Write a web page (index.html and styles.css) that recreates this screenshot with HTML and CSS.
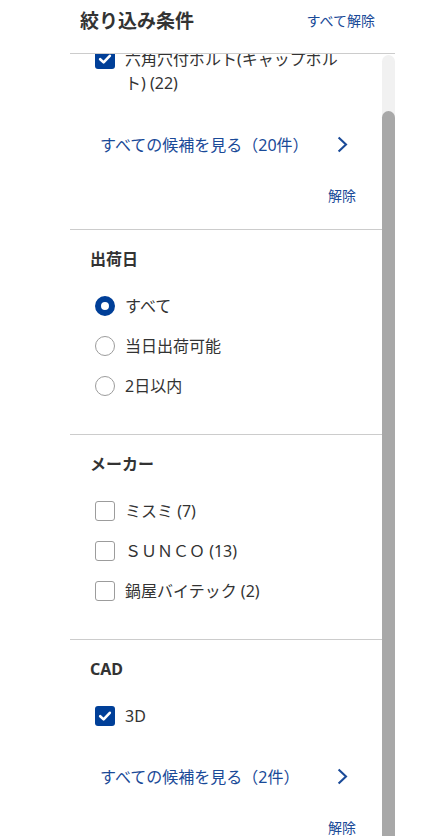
FILE: index.html
```html
<!DOCTYPE html>
<html lang="ja">
<head>
<meta charset="utf-8">
<title>絞り込み条件</title>
<link rel="stylesheet" href="styles.css">
</head>
<body>
<div class="drawer">
  <header class="drawer-head">
    <h2 class="drawer-title">絞り込み条件</h2>
    <a class="clear-all" href="#">すべて解除</a>
  </header>
  <div class="drawer-body">
    <div class="scroll">
      <section class="facet facet-first">
        <ul class="options">
          <li class="option">
            <span class="box box-checked"><svg viewBox="0 0 20 20" width="20" height="20"><polyline points="5.2,10.2 8.6,13.4 14.8,6.8" fill="none" stroke="#fff" stroke-width="2.6" stroke-linecap="round" stroke-linejoin="round"/></svg></span>
            <span class="option-label">六角穴付ボルト(キャップボルト) (22)</span>
          </li>
        </ul>
        <a class="see-all" href="#"><span>すべての候補を見る（20件）</span><svg class="chev" viewBox="0 0 11 17" width="11" height="17"><polyline points="1.6,1.4 9,8.5 1.6,15.6" fill="none" stroke="currentColor" stroke-width="2.1"/></svg></a>
        <div class="clear-row"><a class="clear" href="#">解除</a></div>
      </section>

      <section class="facet">
        <h3 class="facet-title">出荷日</h3>
        <ul class="options">
          <li class="option"><span class="radio radio-on"></span><span class="option-label">すべて</span></li>
          <li class="option"><span class="radio"></span><span class="option-label">当日出荷可能</span></li>
          <li class="option"><span class="radio"></span><span class="option-label">2日以内</span></li>
        </ul>
      </section>

      <section class="facet">
        <h3 class="facet-title">メーカー</h3>
        <ul class="options">
          <li class="option"><span class="box"></span><span class="option-label">ミスミ (7)</span></li>
          <li class="option"><span class="box"></span><span class="option-label">ＳＵＮＣＯ (13)</span></li>
          <li class="option"><span class="box"></span><span class="option-label">鍋屋バイテック (2)</span></li>
        </ul>
      </section>

      <section class="facet">
        <h3 class="facet-title">CAD</h3>
        <ul class="options">
          <li class="option">
            <span class="box box-checked"><svg viewBox="0 0 20 20" width="20" height="20"><polyline points="5.2,10.2 8.6,13.4 14.8,6.8" fill="none" stroke="#fff" stroke-width="2.6" stroke-linecap="round" stroke-linejoin="round"/></svg></span>
            <span class="option-label">3D</span>
          </li>
        </ul>
        <a class="see-all" href="#"><span>すべての候補を見る（2件）</span><svg class="chev" viewBox="0 0 11 17" width="11" height="17"><polyline points="1.6,1.4 9,8.5 1.6,15.6" fill="none" stroke="currentColor" stroke-width="2.1"/></svg></a>
        <div class="clear-row"><a class="clear" href="#">解除</a></div>
      </section>
    </div>
    <div class="scrollbar"><div class="thumb"></div></div>
  </div>
</div>
</body>
</html>
```

FILE: styles.css
```css
html, body {
  margin: 0;
  padding: 0;
  background: #fff;
}
body {
  height: 836px;
  overflow: hidden;
  font-family: "Noto Sans", "Noto Sans CJK JP", sans-serif;
  color: #333;
}
a {
  text-decoration: none;
}
.drawer {
  margin-left: 70px;
  width: 325px;
  height: 836px;
  display: flex;
  flex-direction: column;
}
.drawer-head {
  box-sizing: border-box;
  height: 54px;
  flex: none;
  display: flex;
  justify-content: space-between;
  align-items: flex-start;
  padding: 8px 20px 0 10px;
  border-bottom: 1px solid #cccccc;
}
.drawer-title {
  margin: 0;
  font-size: 19px;
  line-height: 26px;
  font-weight: 700;
  color: #333;
}
.clear-all {
  font-size: 14px;
  line-height: 26px;
  color: #1a4a98;
}
.drawer-body {
  flex: 1;
  display: flex;
  min-height: 0;
  overflow: hidden;
}
.scroll {
  width: 312px;
  flex: none;
  overflow: hidden;
}
.scrollbar {
  width: 13px;
  flex: none;
  margin-top: 1px;
  background: #f1f1f1;
  border-radius: 6.5px 6.5px 0 0;
  display: flex;
  flex-direction: column;
}
.thumb {
  margin-top: 56px;
  flex: 1;
  background: #a8a8a8;
  border-radius: 6.5px 6.5px 0 0;
}
.facet {
  padding: 17px 0 23px 20px;
  border-top: 1px solid #cccccc;
}
.facet-first {
  padding-top: 0;
  border-top: none;
}
.facet-first .options {
  margin-top: -15px;
}
.facet-first .see-all {
  margin-top: 21px;
}
.facet-title {
  margin: 0;
  font-size: 16px;
  line-height: 24px;
  font-weight: 700;
  color: #333;
}
.options {
  list-style: none;
  margin: 15px 0 0;
  padding: 0;
}
.facet > .options:last-child {
  margin-bottom: 5px;
}
.option {
  display: flex;
  align-items: flex-start;
  gap: 10px;
  padding: 8px 32px 8px 5px;
  font-size: 16px;
  line-height: 24px;
  color: #333;
}
.option-label {
  flex: 1;
  min-width: 0;
}
.box {
  box-sizing: border-box;
  width: 20px;
  height: 20px;
  flex: none;
  margin-top: 2px;
  border: 1.5px solid #9c9c9c;
  border-radius: 3px;
  background: #fff;
}
.box-checked {
  border: none;
  background: #003f98;
}
.box svg {
  display: block;
}
.radio {
  box-sizing: border-box;
  width: 20px;
  height: 20px;
  flex: none;
  margin-top: 2px;
  border: 1.5px solid #9c9c9c;
  border-radius: 50%;
  background: #fff;
}
.radio-on {
  border: 6px solid #003f98;
}
.see-all {
  margin-top: 20px;
  height: 40px;
  display: flex;
  align-items: center;
  justify-content: space-between;
  padding: 0 34px 0 10px;
  font-size: 16px;
  color: #1a4a98;
}
.chev {
  display: block;
  color: #1a4a98;
}
.clear-row {
  margin-top: 21px;
  padding-right: 26px;
  text-align: right;
  line-height: 20px;
}
.clear {
  font-size: 14px;
  line-height: 20px;
  color: #1a4a98;
}
```
